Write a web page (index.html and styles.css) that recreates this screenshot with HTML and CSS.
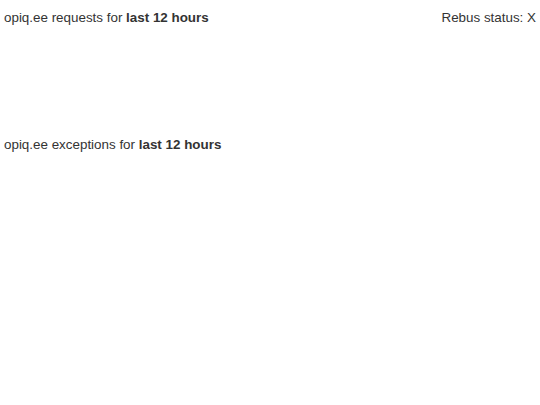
FILE: index.html
```html
<!DOCTYPE html>
<html lang="en">

<head>
    <meta charset="UTF-8">
    <meta name="viewport" content="width=device-width, initial-scale=1.0">
    <title>opiq.ee status</title>
    <link rel="stylesheet" href="styles.css">
</head>

<body>
    <div class="dashboard">
        <div class="panel">
            <div class="panel-header">
                <div class="panel-title">opiq.ee requests for <b>last 12 hours</b></div>
                <div class="rebus-status">Rebus status: X</div>
            </div>
            <div class="chart" id="requests-chart"></div>
        </div>
        <div class="panel">
            <div class="panel-header">
                <div class="panel-title">opiq.ee exceptions for <b>last 12 hours</b></div>
            </div>
            <div class="chart" id="exceptions-chart"></div>
        </div>
    </div>
</body>

</html>
```

FILE: styles.css
```css
body {
    margin: 0;
    background-color: #fff;
    font-family: "Liberation Sans", Arial, sans-serif;
    font-size: 13.4px;
    color: #333;
}

.dashboard {
    padding: 8px 4px;
}

.panel-header {
    display: flex;
    justify-content: space-between;
    line-height: 20px;
}

.chart {
    height: 107px;
}
```
